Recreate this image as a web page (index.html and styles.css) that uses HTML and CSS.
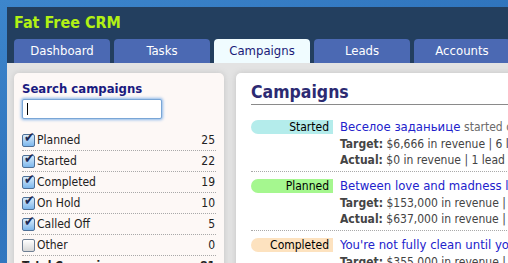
FILE: index.html
```html
<!DOCTYPE html>
<html>

<head>
  <meta charset="UTF-8">
  <title>Fat Free CRM - Campaigns</title>
  <link rel="stylesheet" href="styles.css">
</head>

<body>
  <div class="page">
    <div class="header">
      <div class="logo">Fat Free CRM</div>
      <ul class="tabs">
        <li>Dashboard</li>
        <li>Tasks</li>
        <li class="active">Campaigns</li>
        <li>Leads</li>
        <li>Accounts</li>
      </ul>
    </div>

    <div class="content">
      <div class="sidebar">
        <div class="search-title">Search campaigns</div>
        <div class="search-box"><span class="caret"></span></div>

        <ul class="filters">
          <li><span class="cb checked"></span><span class="name">Planned</span><span class="count">25</span></li>
          <li><span class="cb checked"></span><span class="name">Started</span><span class="count">22</span></li>
          <li><span class="cb checked"></span><span class="name">Completed</span><span class="count">19</span></li>
          <li><span class="cb checked"></span><span class="name">On Hold</span><span class="count">10</span></li>
          <li><span class="cb checked"></span><span class="name">Called Off</span><span class="count">5</span></li>
          <li><span class="cb"></span><span class="name">Other</span><span class="count">0</span></li>
          <li class="total"><span class="name">Total Campaigns</span><span class="count">81</span></li>
        </ul>
      </div>

      <div class="main">
        <h1>Campaigns</h1>

        <div class="campaign">
          <div class="badge started">Started</div>
          <div class="info">
            <div class="title"><a href="#">Веселое заданьице</a> <span class="meta">started over a month ago</span></div>
            <div class="line"><b>Target:</b> $6,666 in revenue | 6 leads | 3 opportunities</div>
            <div class="line"><b>Actual:</b> $0 in revenue | 1 lead | 0 opportunities</div>
          </div>
        </div>

        <div class="campaign">
          <div class="badge planned">Planned</div>
          <div class="info">
            <div class="title"><a href="#">Between love and madness lies obsession</a></div>
            <div class="line"><b>Target:</b> $153,000 in revenue | 12 leads</div>
            <div class="line"><b>Actual:</b> $637,000 in revenue | 2 leads</div>
          </div>
        </div>

        <div class="campaign">
          <div class="badge completed">Completed</div>
          <div class="info">
            <div class="title"><a href="#">You're not fully clean until you're zestfully clean</a></div>
            <div class="line"><b>Target:</b> $355,000 in revenue | 10 leads</div>
          </div>
        </div>
      </div>
    </div>
  </div>
</body>

</html>
```

FILE: styles.css
```css
body {
  margin: 0;
  font-family: "DejaVu Sans Condensed", "DejaVu Sans", sans-serif;
  background: linear-gradient(160deg, #3d86cc 0%, #2f74bd 40%, #3b82c9 100%);
  overflow: hidden;
}

.page {
  margin: 7px 0 0 7px;
  width: 560px;
  height: 300px;
  background: #e3e3e3;
}

.header {
  background: #233f5f;
  padding: 7px 0 0 7px;
}

.logo {
  height: 25px;
  line-height: 18px;
  font-size: 16px;
  font-weight: bold;
  color: #b2f114;
}

.tabs {
  display: flex;
  gap: 4px;
  margin: 0;
  padding: 0;
  list-style: none;
}

.tabs li {
  width: 96px;
  height: 24px;
  line-height: 24px;
  text-align: center;
  font-size: 13px;
  color: #ffffff;
  background: #4b69b3;
  border-radius: 4px 4px 0 0;
}

.tabs li.active {
  background: #f0fcff;
  color: #1a1a78;
}

.content {
  display: flex;
  gap: 12px;
  padding: 10px 0 0 7px;
}

.sidebar {
  flex-shrink: 0;
  width: 194px;
  height: 200px;
  padding: 8px 8px 0 8px;
  background: #fdf8f6;
  border-radius: 5px 5px 0 0;
  box-shadow: 0 0 6px #c4c4c4;
}

.search-title {
  font-size: 13px;
  font-weight: bold;
  color: #1a1a80;
  line-height: 15px;
}

.search-box {
  width: 138px;
  height: 18px;
  margin: 3px 0 11px 0;
  background: #ffffff;
  border: 1px solid #7aa6d6;
  box-shadow: 0 0 3px 1px #8cb8ea;
  border-radius: 2px;
}

.caret {
  display: block;
  width: 1px;
  height: 12px;
  margin: 3px 0 0 4px;
  background: #000000;
}

.filters {
  margin: 0;
  padding: 0;
  list-style: none;
}

.filters li {
  display: flex;
  align-items: center;
  height: 20px;
  border-bottom: 1px dotted #a9a9a9;
  font-size: 12px;
  color: #222222;
}

.filters .name {
  flex: 1;
}

.filters .count {
  padding-right: 1px;
}

.filters .total {
  font-weight: bold;
  border-bottom: none;
}

.cb {
  width: 11px;
  height: 11px;
  margin-right: 2px;
  border: 1px solid #6f7f93;
  border-radius: 2px;
  background: linear-gradient(#ffffff, #d7d7d7);
  position: relative;
}

.cb.checked {
  background: linear-gradient(#d9ecfb, #7cb6ec);
  border-color: #4e6f96;
}

.cb.checked::after {
  content: "✔";
  position: absolute;
  left: 1px;
  top: -6px;
  font-size: 14px;
  color: #1c2a55;
}

.main {
  flex: 1;
  height: 200px;
  padding: 8px 0 0 15px;
  background: #ffffff;
  border-radius: 5px 0 0 0;
  box-shadow: 0 0 6px #c4c4c4;
}

h1 {
  margin: 0;
  font-size: 17.5px;
  line-height: 23px;
  color: #2c2a72;
  border-bottom: 1px solid #8a8a8a;
}

.campaign {
  display: flex;
  gap: 7px;
  padding: 15px 0 3px 0;
  border-bottom: 1px dotted #a9a9a9;
}

.campaign + .campaign {
  padding-top: 7px;
}

.badge {
  flex-shrink: 0;
  width: 78px;
  height: 14px;
  padding-right: 4px;
  line-height: 14px;
  text-align: right;
  font-size: 12px;
  color: #000000;
  border-radius: 7px 0 0 7px;
}

.badge.started {
  background: #b4eceb;
}

.badge.planned {
  background: #a5f78f;
}

.badge.completed {
  background: #fde2bf;
}

.info {
  white-space: nowrap;
}

.title {
  font-size: 13px;
  line-height: 14px;
  margin-bottom: 2px;
}

.title a {
  color: #2222cc;
  text-decoration: none;
}

.meta {
  font-size: 12px;
  color: #6a6a6a;
}

.line {
  font-size: 12px;
  line-height: 16px;
  color: #444444;
}
```
